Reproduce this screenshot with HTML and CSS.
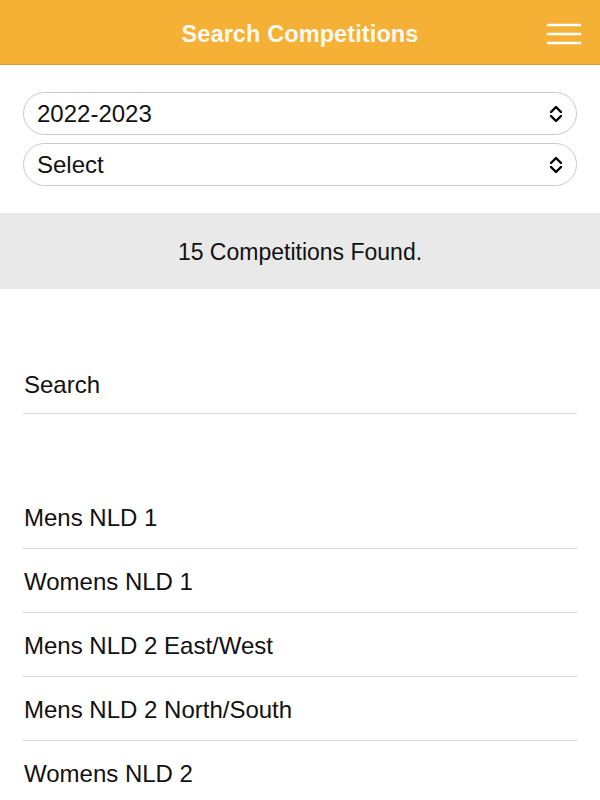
FILE: index.html
```html
<!DOCTYPE html>
<html>
<head>
<meta charset="utf-8">
<link rel="stylesheet" href="styles.css">
</head>
<body>
<header class="topbar">
  <div class="title">Search Competitions</div>
  <button class="menu" aria-label="Menu">
    <svg width="36" height="24" viewBox="0 0 36 24">
      <line x1="2" y1="3" x2="34" y2="3"/>
      <line x1="2" y1="12" x2="34" y2="12"/>
      <line x1="2" y1="21" x2="34" y2="21"/>
    </svg>
  </button>
</header>
<section class="filters">
  <div class="select">
    <span>2022-2023</span>
    <svg class="chev" width="14" height="18" viewBox="0 0 14 18"><path d="M2 7 L7 2 L12 7 M2 11 L7 16 L12 11"/></svg>
  </div>
  <div class="select">
    <span>Select</span>
    <svg class="chev" width="14" height="18" viewBox="0 0 14 18"><path d="M2 7 L7 2 L12 7 M2 11 L7 16 L12 11"/></svg>
  </div>
</section>
<div class="found">15 Competitions Found.</div>
<div class="search">Search</div>
<ul class="list">
  <li>Mens NLD 1</li>
  <li>Womens NLD 1</li>
  <li>Mens NLD 2 East/West</li>
  <li>Mens NLD 2 North/South</li>
  <li>Womens NLD 2</li>
</ul>
</body>
</html>
```
FILE: styles.css
```css
html, body {
  margin: 0;
  padding: 0;
  background: #fff;
  font-family: "Liberation Sans", Arial, sans-serif;
  color: #111;
  overflow: hidden;
}
.topbar {
  position: relative;
  height: 64px;
  background: #f5b036;
  border-bottom: 1px solid #dc9d2c;
  display: flex;
  align-items: center;
  justify-content: center;
}
.title {
  color: #fbf8f0;
  font-weight: bold;
  font-size: 23.5px;
  margin-top: 4px;
  letter-spacing: 0.1px;
}
.menu {
  position: absolute;
  right: 18px;
  top: 22px;
  background: none;
  border: 0;
  padding: 0;
  width: 36px;
  height: 24px;
}
.menu svg { display: block; }
.menu line {
  stroke: #fff;
  stroke-width: 2.6;
  stroke-linecap: round;
}
.filters {
  padding: 27px 23px 27px;
  display: flex;
  flex-direction: column;
  gap: 8px;
}
.select {
  height: 41px;
  border: 1px solid #c9c9c9;
  border-radius: 22px;
  display: flex;
  align-items: center;
  justify-content: space-between;
  padding: 0 13px 0 13px;
  font-size: 24px;
}
.chev {
  fill: none;
  stroke: #000;
  stroke-width: 2.4;
  stroke-linecap: round;
  stroke-linejoin: round;
}
.found {
  height: 76px;
  box-sizing: border-box;
  padding-top: 3px;
  background: #e9e9e9;
  display: flex;
  align-items: center;
  justify-content: center;
  font-size: 23px;
}
.search {
  margin: 61px 23px 0;
  padding: 21px 1px 14px;
  line-height: 28px;
  font-size: 24px;
  border-bottom: 1px solid #dcdcdc;
}
.list {
  list-style: none;
  margin: 71px 23px 0;
  padding: 0;
}
.list li {
  padding: 19px 1px 16px;
  line-height: 28px;
  font-size: 24px;
  border-bottom: 1px solid #dcdcdc;
}
```
